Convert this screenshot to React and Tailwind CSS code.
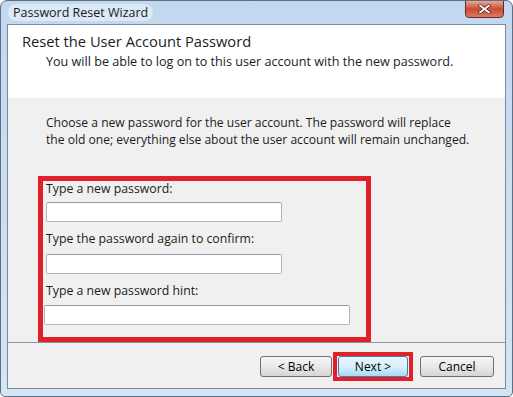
const font = { fontFamily: '"Open Sans", "Noto Sans", sans-serif' };

const TextBox = ({ className }) => (
  <div
    className={`h-[20px] bg-white border border-[#abb7c4] border-t-[#8e9aa8] rounded-[2px] ${className}`}
  />
);

const Button = ({ label, primary, w }) => (
  <button
    className={
      primary
        ? `${w} h-[21px] rounded-[3px] border border-[#3c7fb1] bg-gradient-to-b from-[#eaf6fd] via-[#d9f0fc] to-[#a7d9f5] text-[12px] leading-none text-black`
        : `${w} h-[21px] rounded-[3px] border border-[#707070] bg-gradient-to-b from-[#f6f6f6] via-[#e9e9e9] to-[#d5d5d5] text-[12px] leading-none text-black`
    }
  >
    {label}
  </button>
);

export default function App() {
  return (
    <div
      className="w-[513px] h-[397px] flex flex-col bg-gradient-to-b from-[#c2d8ee] to-[#d4e5f5] border border-[#5d6f82] rounded-t-[7px] rounded-b-[5px] overflow-hidden"
      style={font}
    >
      <div className="h-[23px] flex items-start justify-between shrink-0">
        <div className="mt-[3px] ml-[7px] px-[5px] rounded-[8px] bg-[#dbe8f5] text-[12.5px] leading-[17px] text-[#1a1a1a]">
          Password Reset Wizard
        </div>
        <div className="mr-[8px] w-[39px] h-[18px] -mt-px rounded-b-[4px] border border-[#6b2a22] bg-gradient-to-b from-[#e8a796] via-[#c94a33] to-[#d77d5f] flex items-center justify-center">
          <svg width="13" height="10" viewBox="0 0 13 10">
            <path d="M2 1.5 L11 8.5 M11 1.5 L2 8.5" stroke="#3d1a14" strokeWidth="3.2" strokeLinecap="square" />
            <path d="M2 1.5 L11 8.5 M11 1.5 L2 8.5" stroke="#ffffff" strokeWidth="1.8" strokeLinecap="square" />
          </svg>
        </div>
      </div>

      <div className="flex-1 mx-[6px] mb-[7px] border border-[#7a8a9b] bg-[#f0f0f0] flex flex-col">
        <div className="h-[73px] bg-white shrink-0 pl-[14px] pt-[5px]">
          <div className="text-[14.7px] leading-[22px] text-[#1c1c1c]">Reset the User Account Password</div>
          <div className="pl-[24px] pt-px text-[12.6px] leading-[18px] text-[#1c1c1c]">
            You will be able to log on to this user account with the new password.
          </div>
        </div>

        <div className="h-[244px] shrink-0 pt-[16px] pl-[38px] text-[12.3px] text-[#1c1c1c]">
          <p className="text-[12.1px] leading-[17px]">
            Choose a new password for the user account. The password will replace
            <br />
            the old one; everything else about the user account will remain unchanged.
          </p>
          <div className="relative z-10 mt-[28px] -ml-[8px] w-[333px] h-[166px] border-[5px] border-[#e2202a] pl-[3px]">
            <div className="leading-[16px]">Type a new password:</div>
            <TextBox className="mt-[5px] w-[236px]" />
            <div className="mt-[9px] leading-[16px]">Type the password again to confirm:</div>
            <TextBox className="mt-[7px] w-[236px]" />
            <div className="mt-[9px] leading-[16px]">Type a new password hint:</div>
            <TextBox className="mt-[6px] -ml-[2px] w-[306px]" />
          </div>
        </div>

        <div className="flex-1 border-t border-[#8a96a3] flex items-start justify-end pr-[11px] pt-[13px]">
          <Button label="< Back" w="w-[72px]" />
          <div className="ml-px flex border-[4px] border-[#e2202a] px-px -mt-[4px]">
            <Button label="Next >" primary w="w-[70px]" />
          </div>
          <div className="ml-[7px] flex">
            <Button label="Cancel" w="w-[74px]" />
          </div>
        </div>
      </div>
    </div>
  );
}
